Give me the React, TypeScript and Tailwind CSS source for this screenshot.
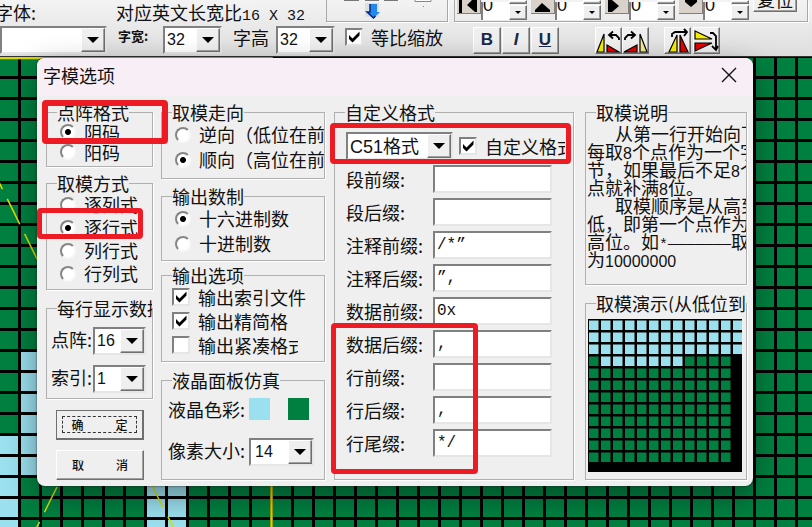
import { useId, type ReactNode } from 'react';

const RAISED =
  'border border-t-white border-l-white border-r-[#6f6f6f] border-b-[#6f6f6f] bg-[#efefef] shadow-[inset_-1px_-1px_0_#a0a0a0]';
const SUNKEN =
  'border-2 border-t-[#808080] border-l-[#808080] border-r-[#e6e6e6] border-b-[#e6e6e6] bg-white';
const MONO = "font-['Liberation_Mono','Noto_Sans_CJK_SC',monospace]";
const SANS = "font-['Liberation_Sans','Noto_Sans_CJK_SC',sans-serif]";

function Group({ title, className = '', children }: { title: string; className?: string; children: ReactNode }) {
  return (
    <fieldset className={`min-w-0 border border-[#b0b0b0] shadow-[1px_1px_0_#fff] ${className}`}>
      <legend className="ml-2.5 h-5 max-w-[calc(100%-10px)] overflow-hidden whitespace-nowrap leading-5">{title}</legend>
      {children}
    </fieldset>
  );
}

function Radio({ name, label, checked, row }: { name: string; label: string; checked?: boolean; row: string }) {
  return (
    <label className={`flex items-center gap-2 overflow-hidden whitespace-nowrap pl-[13px] ${row}`}>
      <input
        type="radio"
        name={name}
        defaultChecked={checked}
        className="size-4 shrink-0 appearance-none rounded-full border-2 border-t-[#858585] border-l-[#858585] border-r-[#f8f8f8] border-b-[#f8f8f8] bg-white checked:bg-[radial-gradient(circle,#000_0_2.5px,#fff_3.5px)]"
      />
      <span>{label}</span>
    </label>
  );
}

function Check({ label, checked, className = '' }: { label: string; checked?: boolean; className?: string }) {
  return (
    <label className={`flex items-center gap-2 overflow-hidden whitespace-nowrap ${className}`}>
      <span className="relative size-[18px] shrink-0">
        <input type="checkbox" defaultChecked={checked} className={`peer block size-[18px] appearance-none ${SUNKEN}`} />
        <svg viewBox="0 0 18 18" className="pointer-events-none absolute inset-0 hidden peer-checked:block">
          <path d="M4 7v4L7.500 14.500 14.500 7.500V3.500L7.500 10.500z" fill="#000" />
        </svg>
      </span>
      <span>{label}</span>
    </label>
  );
}

function Combo({ id, label, value, className, text = `pl-0.5 text-[16px] ${SANS}` }: { id?: string; label?: string; value: string; className: string; text?: string }) {
  return (
    <span className={`relative block h-7 shrink-0 ${className}`}>
      <select id={id} aria-label={label} className={`block h-full w-full appearance-none rounded-none ${SUNKEN} ${text}`}>
        <option>{value}</option>
      </select>
      <span className={`pointer-events-none absolute inset-y-0.5 right-0.5 flex w-6 items-center justify-center ${RAISED}`}>
        <svg width="12" height="6" viewBox="0 0 12 6">
          <path d="M0 0h12L6 6z" />
        </svg>
      </span>
    </span>
  );
}

function Field({ label, value }: { label: string; value: string }) {
  const id = useId();
  return (
    <div className="flex h-7 items-center">
      <label htmlFor={id} className="w-[87px] leading-6">{label}</label>
      <input id={id} defaultValue={value} className={`h-7 w-[119px] pl-0.5 text-[16px] ${SUNKEN} ${MONO}`} />
    </div>
  );
}

function Nudge({ name, d }: { name: string; d: string }) {
  return (
    <div className="flex w-[74px] shrink-0 items-end">
      <button type="button" aria-label={name} className="mb-1.5 h-[14px] w-6 overflow-hidden border-r border-b border-[#808080] bg-[#d8d2ca]">
        <svg width="22" height="13" viewBox="0 0 22 13">
          <path d={d} />
        </svg>
      </button>
      <input aria-label={name} defaultValue="0" className={`h-[18px] w-7 border-l-2 border-[#808080] bg-white pb-3 text-[18px] ${SANS}`} />
      <span className="flex w-[18px] flex-col gap-px">
        <span className={`h-1 ${RAISED}`} />
        <button type="button" aria-label={`${name} -`} className={`flex h-[15px] items-center justify-center ${RAISED}`}>
          <svg width="6" height="3" viewBox="0 0 6 3">
            <path d="M0 0h6L3 3z" />
          </svg>
        </button>
      </span>
    </div>
  );
}

function MirrorButton({ name, children }: { name: string; children: ReactNode }) {
  return (
    <button type="button" aria-label={name} className={`h-[27px] w-[27px] ${RAISED}`}>
      <svg width="25" height="25" viewBox="0 0 25 25" stroke="#000" strokeWidth="1.2" fill="none">
        {children}
      </svg>
    </button>
  );
}

function Toolbar() {
  return (
    <header className="h-[57px] shrink-0 overflow-hidden border-b border-[#333] bg-linear-to-b from-[#f3f3f3] to-[#dedede]">
      <div className="flex h-[22px] items-end">
        <span className="flex h-5 w-9 shrink-0 justify-end overflow-hidden whitespace-nowrap leading-5">字体:</span>
        <span className="ml-20 h-[21px] w-[210px] shrink-0 whitespace-nowrap leading-[22px]">
          对应英文长宽比<span className={`text-[15px] ${MONO}`}>16 X 32</span>
        </span>
        <div className="flex h-full w-[122px] shrink-0 border-x border-b border-[#a8a8a8] shadow-[1px_1px_0_#fff]">
          <svg width="118" height="19" viewBox="0 0 118 19">
            <path d="M17 .5h15M38 .5h14M57 .5h14" stroke="#777" />
            <path d="M88 0v1.500h16V0" stroke="#888" fill="#fff" />
            <path d="M38 3h14v14H38z" fill="#dedede" />
            <path d="M43 4h7v8h3l-6.500 6L40 12h3z" fill="#2489ee" />
            <path d="M43 4v8h-3l6.500 6 2-2" stroke="#002a88" strokeWidth="1.5" fill="none" />
            <path d="M96 6h1v1h-1z" fill="#888" />
          </svg>
        </div>
        <div className="ml-1.5 flex h-full min-w-0 flex-1 items-end border-x border-b border-[#a8a8a8] pb-px pl-0.5 shadow-[1px_1px_0_#fff]">
          <Nudge name="左移" d="M2 0h3v13H2zM20 0v12h-2L10 5l5-5z" />
          <Nudge name="上移" d="M4 12v-2l7-7 8 7v2z" />
          <Nudge name="右移" d="M3 0h4l7 6-7 6H3z" />
          <Nudge name="下移" d="M6 0h12v2l-6 5-6-5z" />
          <button type="button" className={`mb-2 flex h-8 w-[44px] shrink-0 items-end justify-center leading-6 ${RAISED}`}>复位</button>
        </div>
        <span className="w-1 shrink-0" />
      </div>
      <div className="flex items-center pt-[3px]">
        <Combo label="字体" value="" className="w-[107px]" />
        <label htmlFor="char-width" className="mb-2 ml-[11px] w-[45px] text-[13px] font-bold leading-4">字宽:</label>
        <Combo id="char-width" value="32" className="w-[59px]" />
        <label htmlFor="char-height" className="mb-1.5 ml-[11px] w-[43px] leading-5">字高</label>
        <Combo id="char-height" value="32" className="w-[59px]" />
        <Check label="等比缩放" checked className="mb-1.5 ml-2.5 w-[128px] leading-6" />
        <div className={`flex gap-px text-[17px] font-bold text-[#1c2748] ${SANS}`}>
          <button type="button" className={`h-[27px] w-7 leading-5 ${RAISED}`}>B</button>
          <button type="button" className={`h-[27px] w-7 italic leading-5 ${RAISED}`}>I</button>
          <button type="button" className={`h-[27px] w-7 leading-5 underline ${RAISED}`}>U</button>
        </div>
        <div className="ml-9 flex">
          <MirrorButton name="左转">
            <path d="M1 24L8 6v18z" fill="#f6ee00" />
            <path d="M11 24v-7l12 7z" fill="#e80000" />
            <path d="M23 12V10l-3-3h-6m3-3.500L13 7l4 3.500" strokeWidth="1.800" />
          </MirrorButton>
          <MirrorButton name="右转">
            <path d="M24 24L17 6v18z" fill="#f3ec8a" />
            <path d="M14 24v-7L1 24z" fill="#e80000" />
            <path d="M2 12V10l3-3h6M8 3.500L12 7l-4 3.500" strokeWidth="1.800" />
          </MirrorButton>
        </div>
        <div className="ml-[15px] flex gap-0.5">
          <MirrorButton name="左右镜像">
            <path d="M4 24L12 7v17z" fill="#f6ee00" />
            <path d="M23 24L15 7v17z" fill="#e80000" />
            <path d="M7 9V6l3-2h12M19 1l3 3-3 4" strokeWidth="1.800" />
          </MirrorButton>
          <MirrorButton name="上下镜像">
            <path d="M1 3l17 8H1z" fill="#f6ee00" />
            <path d="M1 23l17-8H1z" fill="#e80000" />
            <path d="M16 5h3l3 3v13m-4-3l4 4 2-4" strokeWidth="1.800" />
          </MirrorButton>
        </div>
      </div>
    </header>
  );
}

function PixelCanvas() {
  return (
    <svg className="h-full w-full" aria-hidden="true">
      <defs>
        <pattern id="cells" width="21" height="21" x="18" y="19" patternUnits="userSpaceOnUse">
          <path d="M0 0h21v3H3v18H0z" fill="#000" />
        </pattern>
      </defs>
      <rect width="100%" height="100%" fill="#008040" />
      <g fill="#9be0ee">
        <rect x="21" y="295" width="20" height="123" />
        <rect x="0" y="379" width="20" height="100%" />
        <rect x="147" y="420" width="39" height="100%" />
      </g>
      <rect width="100%" height="100%" fill="url(#cells)" />
      <g stroke="#d8e000" strokeWidth="1.500" fill="none" strokeDasharray="28 11">
        <path d="M-10 107L40 208" />
        <path d="M57 430L30 484" />
        <path d="M150 425L182 487" />
      </g>
      <path d="M0 1h272M271.500 0v470" stroke="#d8d800" strokeWidth="2.500" fill="none" />
    </svg>
  );
}

const preview = Array.from({ length: 12 }, (_, y) =>
  Array.from({ length: y < 3 ? 13 : 12 }, (_, x) => ({ x, y, lit: y < 3 || (y === 3 && x > 0 && x < 8) })),
).flat();

const fields = [
  ['段前缀:', ''],
  ['段后缀:', ''],
  ['注释前缀:', '/*”'],
  ['注释后缀:', '”,'],
  ['数据前缀:', '0x'],
  ['数据后缀:', ','],
  ['行前缀:', ''],
  ['行后缀:', ','],
  ['行尾缀:', '*/'],
];

function Half({ children }: { children: ReactNode }) {
  return <span className={`text-[16px] ${SANS}`}>{children}</span>;
}

function OptionsDialog() {
  return (
    <section role="dialog" aria-label="字模选项" className="absolute top-px left-[37px] w-[716px] rounded-lg bg-[#efefef] shadow-[0_0_2px_#222,0_10px_30px_rgba(0,0,0,0.4)]">
      <header className="flex h-[38px] items-center justify-between rounded-t-lg bg-[#f8eef6] pr-4 pb-1 pl-1.5">
        <h1 className="leading-5">字模选项</h1>
        <button type="button" aria-label="关闭" className="size-4">
          <svg width="16" height="16" viewBox="0 0 16 16" stroke="#111" strokeWidth="1.4">
            <path d="M1 1l14 14M15 1L1 15" />
          </svg>
        </button>
      </header>
      <div className="grid grid-cols-[107px_164px_1fr_162px] gap-x-2 pt-1.5 pr-1.5 pb-1.5 pl-[9px]">
        <div className="flex min-w-0 flex-col">
          <Group title="点阵格式" className="mb-1.5 pb-1">
            <Radio name="format" label="阴码" checked row="h-5 leading-5" />
            <Radio name="format" label="阳码" row="h-5 leading-5" />
          </Group>
          <Group title="取模方式" className="mb-2 pb-1">
            <Radio name="mode" label="逐列式" row="h-[23px] leading-[23px]" />
            <Radio name="mode" label="逐行式" checked row="h-[23px] leading-[23px]" />
            <Radio name="mode" label="列行式" row="h-[23px] leading-[23px]" />
            <Radio name="mode" label="行列式" row="h-[23px] leading-[23px]" />
          </Group>
          <Group title="每行显示数据" className="mb-[11px] pb-[5px]">
            <div className="flex flex-col gap-2.5 pt-[9px] pl-1">
              <div className="flex">
                <label htmlFor="dots" className="w-[42px] whitespace-nowrap leading-6">点阵:</label>
                <Combo id="dots" value="16" className="w-[53px]" />
              </div>
              <div className="flex">
                <label htmlFor="index" className="w-[42px] whitespace-nowrap leading-6">索引:</label>
                <Combo id="index" value="1" className="w-[53px]" />
              </div>
            </div>
          </Group>
          <div className="flex flex-col gap-2.5 pl-2.5 text-[12px] font-medium">
            <button type="button" className="h-[30px] w-[88px] border border-r-2 border-b-2 border-[#6f6f6f] bg-[#efefef] p-[5px]">
              <span className="flex h-full items-center justify-center gap-8 border border-dashed border-[#333] leading-4">
                <span>确</span>
                <span>定</span>
              </span>
            </button>
            <button type="button" className={`flex h-[30px] w-[88px] items-center justify-center gap-8 ${RAISED}`}>
              <span>取</span>
              <span>消</span>
            </button>
          </div>
        </div>

        <div className="flex min-w-0 flex-col">
          <Group title="取模走向" className="mb-[7px] pb-1.5">
            <Radio name="direction" label="逆向（低位在前）" row="h-[25px] leading-[25px]" />
            <Radio name="direction" label="顺向（高位在前）" checked row="h-[25px] leading-[25px]" />
          </Group>
          <Group title="输出数制" className="mb-1 pb-1">
            <Radio name="base" label="十六进制数" checked row="h-[25px] leading-[25px]" />
            <Radio name="base" label="十进制数" row="h-[25px] leading-[25px]" />
          </Group>
          <Group title="输出选项" className="mb-2 pb-1">
            <Check label="输出索引文件" checked className="mx-2.5 h-6 leading-6" />
            <Check label="输出精简格" checked className="mx-2.5 h-6 leading-6" />
            <Check label="输出紧凑格式" className="ml-2.5 h-6 w-[126px] leading-6" />
          </Group>
          <Group title="液晶面板仿真" className="flex-1">
            <div className="flex flex-col gap-[18px] pt-2 pl-1.5">
              <div className="flex items-center">
                <span className="w-[81px] whitespace-nowrap leading-5">液晶色彩:</span>
                <button type="button" aria-label="前景色" className="mr-[18px] h-[22px] w-[21px] bg-[#9be0ee]" />
                <button type="button" aria-label="背景色" className="h-[22px] w-[21px] bg-[#008040]" />
              </div>
              <div className="flex">
                <label htmlFor="pixel" className="w-[81px] whitespace-nowrap leading-6">像素大小:</label>
                <Combo id="pixel" value="14" className="w-[65px]" text={`pl-1 text-[16px] ${SANS}`} />
              </div>
            </div>
          </Group>
        </div>

        <Group title="自定义格式" className="mr-[3px] ml-px">
          <div className="flex flex-col gap-[5px] pt-2.5 pl-[11px]">
            <div className="flex h-7 items-center gap-1.5">
              <Combo label="格式" value="C51格式" className="w-[107px]" text={`pl-0.5 text-[18px] ${SANS}`} />
              <Check label="自定义格式" checked className="w-[106px]" />
            </div>
            {fields.map(([label, value]) => (
              <Field key={label} label={label} value={value} />
            ))}
          </div>
        </Group>

        <div className="flex min-w-0 flex-col">
          <Group title="取模说明" className="mb-2 pb-4">
            <div className="overflow-hidden pt-0.5 pl-px leading-[18px] whitespace-nowrap">
              <p className="h-[18px] indent-7">从第一行开始向下</p>
              <p className="h-[18px]">每取<Half>8</Half>个点作为一个字</p>
              <p className="h-[18px]">节，如果最后不足<Half>8</Half>个</p>
              <p className="h-[18px]">点就补满<Half>8</Half>位。</p>
              <p className="h-[18px] indent-7">取模顺序是从高到</p>
              <p className="h-[18px]">低，即第一个点作为</p>
              <p className="h-[18px]">高位。如<span className={`text-[15px] ${MONO}`}>*───────</span>取</p>
              <p className="h-[18px]">为<Half>10000000</Half></p>
            </div>
          </Group>
          <Group title="取模演示(从低位到高位)" className="flex-1">
            <svg width="154" height="153" viewBox="0 0 154 153" className="mt-1.5 ml-0.5 block">
              <rect width="154" height="153" />
              {preview.map(({ x, y, lit }) => (
                <rect key={`${x}-${y}`} x={x * 12 + 1} y={y * 12 + 1.5} width="9.500" height="9.500" fill={lit ? '#9be0ee' : '#008040'} />
              ))}
            </svg>
          </Group>
        </div>
      </div>

      <div className="pointer-events-none absolute top-[42px] left-[5px] h-[44px] w-[126px] rounded-sm border-6 border-[#ed1c24]" />
      <div className="pointer-events-none absolute top-[150px] left-0 h-[31px] w-[106px] rounded-sm border-5 border-[#ed1c24]" />
      <div className="pointer-events-none absolute top-[65px] left-[293px] h-[41px] w-[241px] rounded-sm border-5 border-[#ed1c24]" />
      <div className="pointer-events-none absolute top-[265px] left-[294px] h-[151px] w-[147px] rounded-sm border-5 border-[#ed1c24]" />
    </section>
  );
}

export default function App() {
  return (
    <div className="flex h-screen flex-col overflow-hidden font-['Noto_Sans_CJK_SC',sans-serif] text-[18px] text-[#111]">
      <Toolbar />
      <main className="relative min-h-0 flex-1">
        <PixelCanvas />
        <OptionsDialog />
      </main>
    </div>
  );
}
